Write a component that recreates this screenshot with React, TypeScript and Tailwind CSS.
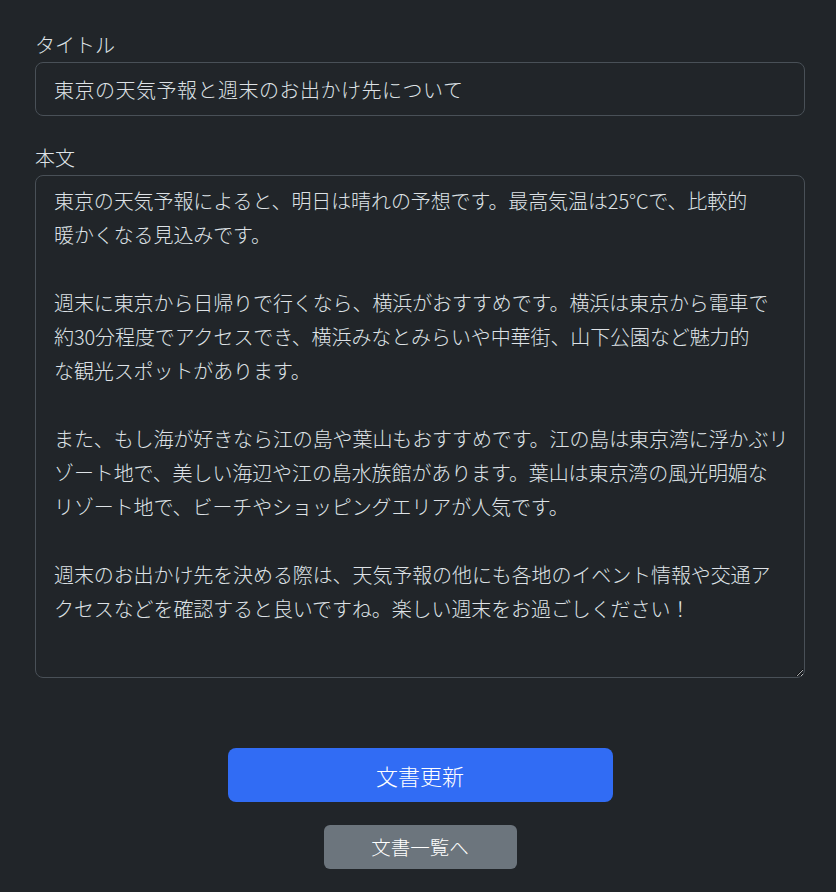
import { useState } from 'react';

const bodyLines = [
  '東京の天気予報によると、明日は晴れの予想です。最高気温は25°Cで、比較的',
  '暖かくなる見込みです。',
  '',
  '週末に東京から日帰りで行くなら、横浜がおすすめです。横浜は東京から電車で',
  '約30分程度でアクセスでき、横浜みなとみらいや中華街、山下公園など魅力的',
  'な観光スポットがあります。',
  '',
  'また、もし海が好きなら江の島や葉山もおすすめです。江の島は東京湾に浮かぶリ',
  'ゾート地で、美しい海辺や江の島水族館があります。葉山は東京湾の風光明媚な',
  'リゾート地で、ビーチやショッピングエリアが人気です。',
  '',
  '週末のお出かけ先を決める際は、天気予報の他にも各地のイベント情報や交通ア',
  'クセスなどを確認すると良いですね。楽しい週末をお過ごしください！',
];

export default function App() {
  const [title, setTitle] = useState('東京の天気予報と週末のお出かけ先について');
  const [body, setBody] = useState(bodyLines.join('\n'));

  return (
    <div
      className="min-h-[892px] bg-[#212529] text-[#dee2e6] font-light"
      style={{ fontFamily: '"Noto Sans CJK JP", "Noto Sans", sans-serif' }}
    >
      <div className="w-[770px] ml-[35px] pt-[30px]">
        {/* タイトル */}
        <label className="block text-[20px] leading-[30px] mb-[2px]">タイトル</label>
        <input
          value={title}
          onChange={(e) => setTitle(e.target.value)}
          className="block w-full h-[54px] px-[18px] text-[20px] tracking-[0.5px] font-light bg-[#212529] text-[#dee2e6] border border-[#495057] rounded-lg outline-none"
        />

        {/* 本文 */}
        <label className="block text-[20px] leading-[30px] mt-[27px] mb-[2px]">本文</label>
        <textarea
          value={body}
          onChange={(e) => setBody(e.target.value)}
          wrap="off"
          className="block w-full h-[503px] pl-[18px] pr-[12px] pt-[8px] text-[20px] leading-[34px] tracking-[-0.1px] font-light bg-[#212529] text-[#dee2e6] border border-[#495057] rounded-lg outline-none overflow-hidden resize-y"
        />

        {/* Actions */}
        <div className="flex flex-col items-center mt-[70px]">
          <button className="w-[385px] h-[54px] rounded-lg bg-[#316cf4] text-white text-[22px] font-light">
            文書更新
          </button>
          <button className="mt-[23px] w-[193px] h-[44px] rounded-md bg-[#6c757d] text-white text-[19.5px] font-light">
            文書一覧へ
          </button>
        </div>
      </div>
    </div>
  );
}
